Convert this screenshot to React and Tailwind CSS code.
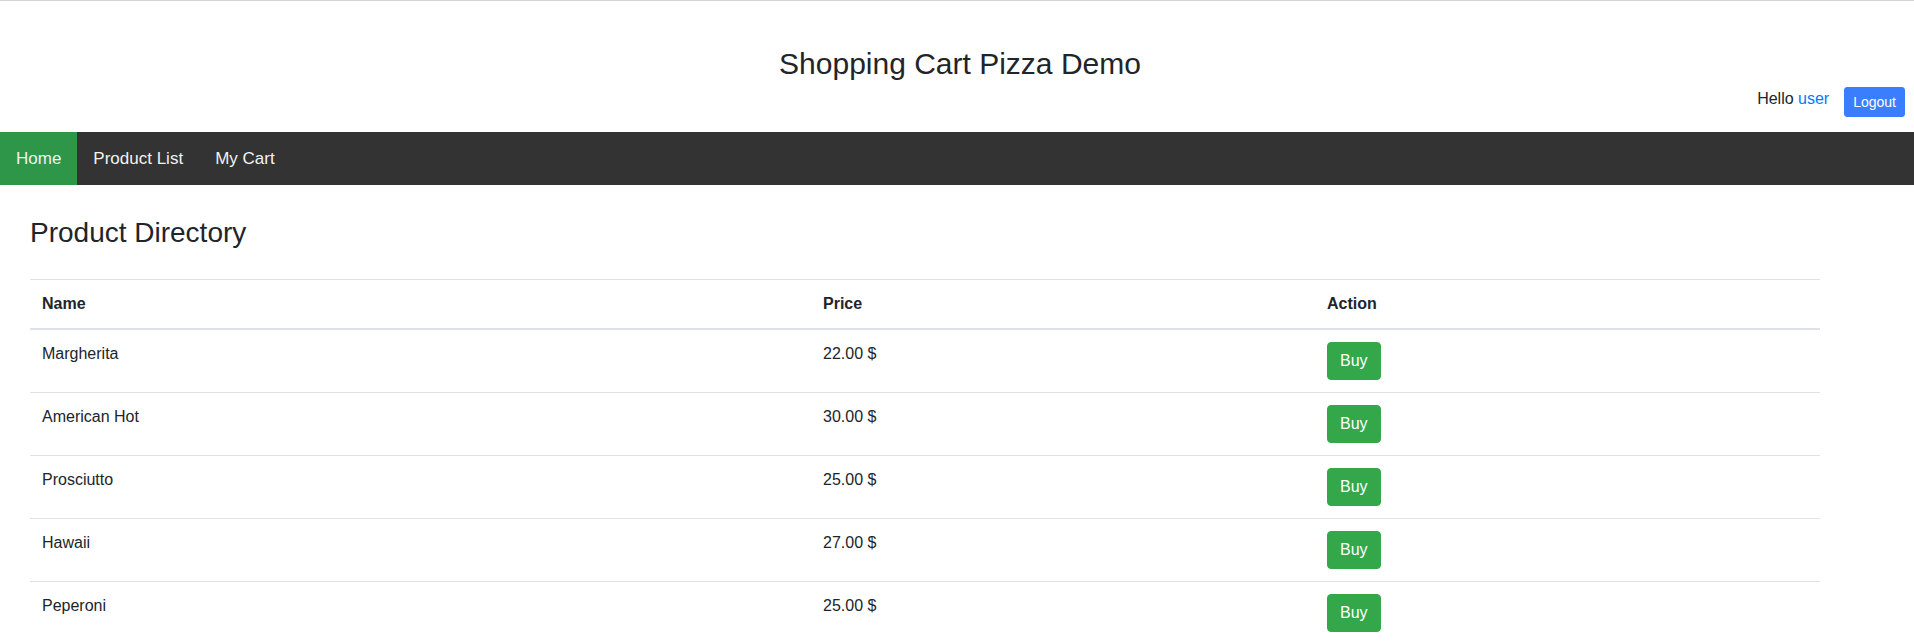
export default function App() {
  const products = [
    { name: "Margherita", price: "22.00 $" },
    { name: "American Hot", price: "30.00 $" },
    { name: "Prosciutto", price: "25.00 $" },
    { name: "Hawaii", price: "27.00 $" },
    { name: "Peperoni", price: "25.00 $" },
  ];
  return (
    <div className="min-h-screen bg-white text-[#212529] font-['Liberation_Sans',Arial,sans-serif]">
      <header className="border-t border-[#d4d4d4]">
        <h1 className="pt-[45px] pl-[6px] text-center text-[30px] leading-[36px] font-normal">
          Shopping Cart Pizza Demo
        </h1>
        <div className="mt-[5px] mb-[15px] flex items-start justify-end pr-[9px]">
          <span className="text-[16px] leading-[24px]">
            Hello <a className="text-[#007bff]">user</a>
          </span>
          <button className="ml-[15px] rounded-[3px] border border-[#3a7efd] bg-[#3a7efd] px-[8px] py-[4px] text-[14px] leading-[20px] text-white">
            Logout
          </button>
        </div>
      </header>
      <nav className="flex bg-[#333333]">
        <a className="bg-[#2d9648] px-[16px] py-[14px] text-[17px] leading-[25px] text-[#f2f2f2]">Home</a>
        <a className="px-[16px] py-[14px] text-[17px] leading-[25px] text-[#f2f2f2]">Product List</a>
        <a className="px-[16px] py-[14px] text-[17px] leading-[25px] text-[#f2f2f2]">My Cart</a>
      </nav>
      <main className="px-[30px]">
        <h3 className="mt-[31px] mb-[29px] text-[28px] leading-[34px] font-normal">Product Directory</h3>
        <table className="w-[1790px] table-fixed border-collapse text-[16px] leading-[24px]">
          <colgroup>
            <col className="w-[781px]" />
            <col className="w-[504px]" />
            <col className="w-[505px]" />
          </colgroup>
          <thead>
            <tr>
              <th className="border-t border-b-2 border-[#dee2e6] p-[12px] text-left align-bottom font-bold">Name</th>
              <th className="border-t border-b-2 border-[#dee2e6] p-[12px] text-left align-bottom font-bold">Price</th>
              <th className="border-t border-b-2 border-[#dee2e6] p-[12px] text-left align-bottom font-bold">Action</th>
            </tr>
          </thead>
          <tbody>
            {products.map((p) => (
              <tr key={p.name}>
                <td className="border-t border-[#dee2e6] p-[12px] align-top">{p.name}</td>
                <td className="border-t border-[#dee2e6] p-[12px] align-top">{p.price}</td>
                <td className="border-t border-[#dee2e6] p-[12px] align-top">
                  <button className="rounded-[4px] border border-[#34a74a] bg-[#34a74a] px-[12px] py-[6px] text-[16px] leading-[24px] text-white">
                    Buy
                  </button>
                </td>
              </tr>
            ))}
          </tbody>
        </table>
      </main>
    </div>
  );
}
